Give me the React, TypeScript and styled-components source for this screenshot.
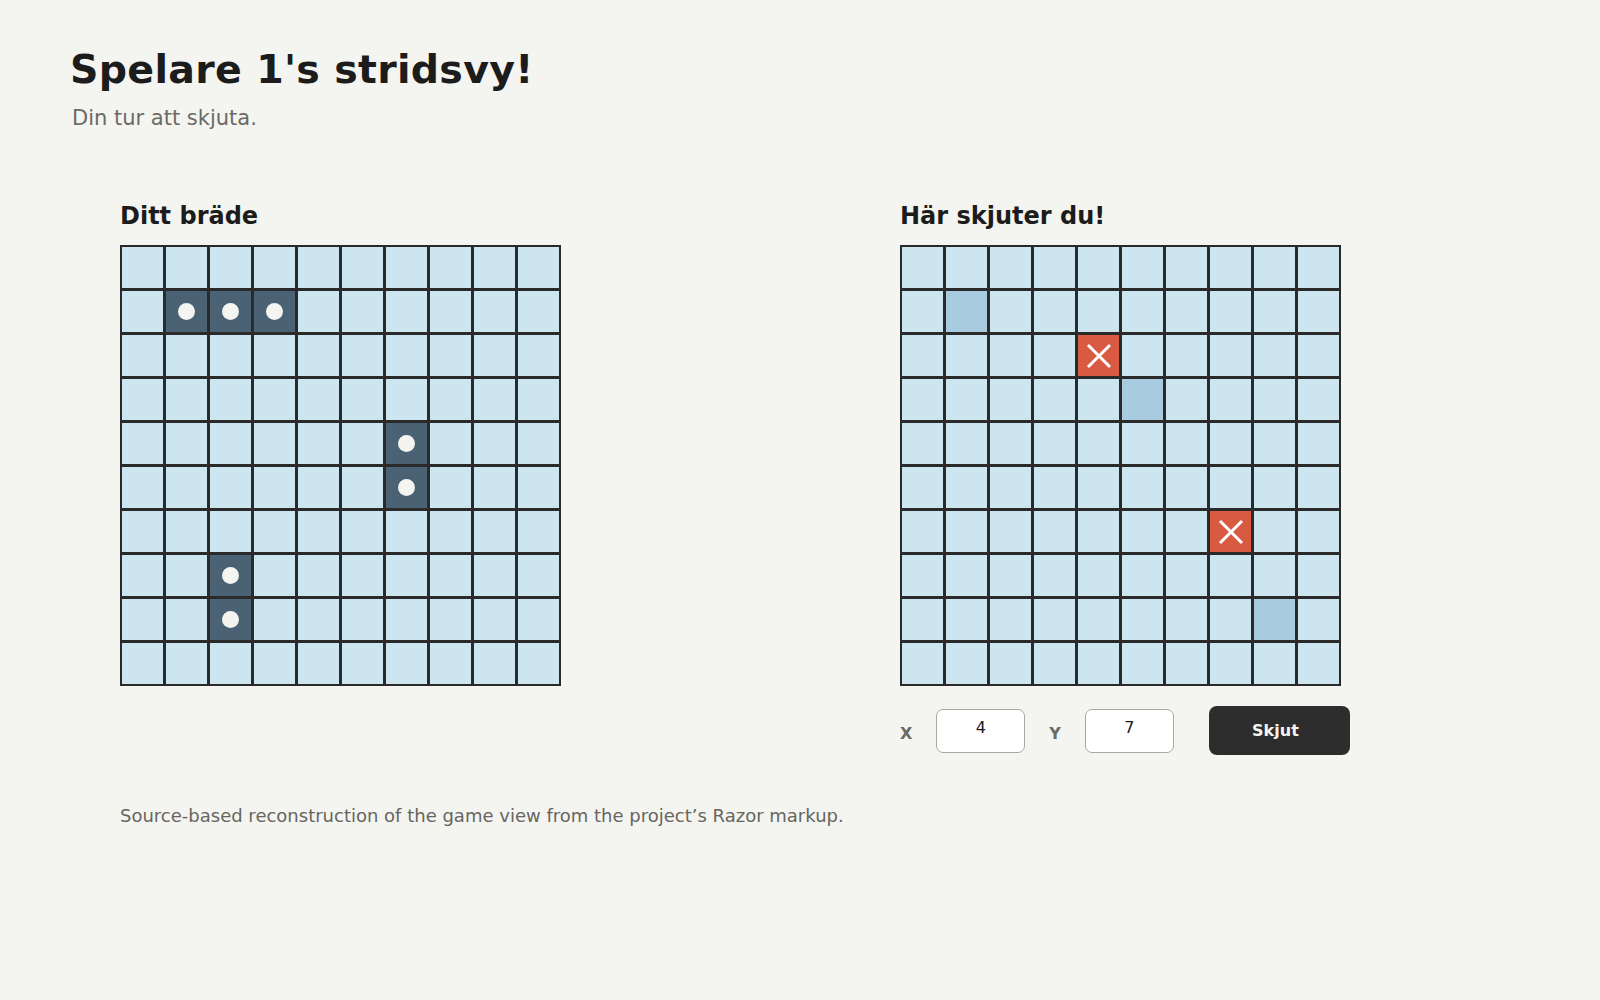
import React from 'react';
import styled, {createGlobalStyle} from 'styled-components';

type CellKind = 'water' | 'ship' | 'miss' | 'hit';

const SIZE = 10;

const Global_Style = createGlobalStyle`
  html, body {
    margin: 0;
    padding: 0;
    background: #f4f4f0;
  }
  body {
    font-family: 'DejaVu Sans', 'Liberation Sans', sans-serif;
    color: #1c1c1c;
  }
`;

const Page = styled.main`
  min-height: 1000px;
  padding: 43px 70px 0;
  box-sizing: border-box;
`;

const Title = styled.h1`
  margin: 0;
  font-size: 39.5px;
  font-weight: 700;
  letter-spacing: 0.3px;
  line-height: 52px;
`;

const Subtitle = styled.p`
  margin: 11px 0 0 2px;
  font-size: 21px;
  color: #6a6a66;
`;

const Boards = styled.section`
  display: grid;
  grid-template-columns: 441px auto;
  column-gap: 339px;
  margin: 72px 0 0 50px;
`;

const Board_Column = styled.div`
  display: flex;
  flex-direction: column;
`;

const Board_Title = styled.h2`
  margin: 0 0 15px;
  font-size: 24px;
  font-weight: 700;
  line-height: 28px;
`;

const Grid = styled.div`
  display: grid;
  grid-template-columns: repeat(${SIZE}, 41px);
  grid-auto-rows: 41px;
  gap: 3px;
  width: max-content;
  border: 2px solid #2a2a2a;
  background: #2a2a2a;
`;

const cellColors: Record<CellKind, string> = {
  water: '#cce5ef',
  ship: '#4b6275',
  miss: '#a8cbe0',
  hit: '#d95a42',
};

const Cell = styled.div<{$kind: CellKind}>`
  display: flex;
  align-items: center;
  justify-content: center;
  background: ${(p) => cellColors[p.$kind]};
`;

const Peg = styled.span`
  width: 17px;
  height: 17px;
  border-radius: 50%;
  background: #f4f4f1;
`;

const Controls = styled.div`
  display: flex;
  align-items: center;
  margin-top: 20px;
`;

const Axis_Label = styled.label`
  font-size: 16px;
  font-weight: 700;
  color: #6a6a66;
  margin: 5px 24px 0 0;
`;

const Coord_Input = styled.input`
  width: 89px;
  height: 44px;
  box-sizing: border-box;
  border: 1.5px solid #a8a8a8;
  border-radius: 7px;
  background: #fff;
  padding: 0 0 6px;
  text-align: center;
  font-family: 'DejaVu Sans', sans-serif;
  font-size: 16px;
  color: #1c1c1c;
  margin-right: 24px;
  outline: none;
`;

const Fire_Button = styled.button`
  width: 141px;
  height: 49px;
  margin-left: 11px;
  padding: 0 8px 0 0;
  border: none;
  border-radius: 8px;
  background: #2d2d2d;
  color: #f4f4f0;
  font-family: 'DejaVu Sans', sans-serif;
  font-size: 16px;
  font-weight: 700;
  cursor: pointer;
`;

const Footnote = styled.p`
  margin: 50px 0 0 50px;
  font-size: 18px;
  color: #66665f;
`;

function HitMark() {
  return (
    <svg width='26' height='26' viewBox='0 0 26 26'>
      <path d='M2 2 L24 24 M24 2 L2 24' stroke='#fff' strokeWidth='3' />
    </svg>
  );
}

function buildBoard(marks: Array<[number, number, CellKind]>): CellKind[][] {
  const rows: CellKind[][] = Array.from({length: SIZE}, () =>
    Array.from({length: SIZE}, () => 'water' as CellKind)
  );
  marks.forEach(([r, c, k]) => {
    rows[r][c] = k;
  });
  return rows;
}

const ownBoard = buildBoard([
  [1, 1, 'ship'],
  [1, 2, 'ship'],
  [1, 3, 'ship'],
  [4, 6, 'ship'],
  [5, 6, 'ship'],
  [7, 2, 'ship'],
  [8, 2, 'ship'],
]);

const targetBoard = buildBoard([
  [1, 1, 'miss'],
  [2, 4, 'hit'],
  [3, 5, 'miss'],
  [6, 7, 'hit'],
  [8, 8, 'miss'],
]);

function Board({cells}: {cells: CellKind[][]}) {
  return (
    <Grid>
      {cells.map((row, r) =>
        row.map((kind, c) => (
          <Cell key={`${r}-${c}`} $kind={kind}>
            {kind === 'ship' && <Peg />}
            {kind === 'hit' && <HitMark />}
          </Cell>
        ))
      )}
    </Grid>
  );
}

export default function App() {
  return (
    <>
      <Global_Style />
      <Page>
        <Title>Spelare 1's stridsvy!</Title>
        <Subtitle>Din tur att skjuta.</Subtitle>
        <Boards>
          <Board_Column>
            <Board_Title>Ditt bräde</Board_Title>
            <Board cells={ownBoard} />
          </Board_Column>
          <Board_Column>
            <Board_Title>Här skjuter du!</Board_Title>
            <Board cells={targetBoard} />
            <Controls>
              <Axis_Label htmlFor='x'>X</Axis_Label>
              <Coord_Input id='x' type='text' defaultValue='4' />
              <Axis_Label htmlFor='y'>Y</Axis_Label>
              <Coord_Input id='y' type='text' defaultValue='7' />
              <Fire_Button>Skjut</Fire_Button>
            </Controls>
          </Board_Column>
        </Boards>
        <Footnote>
          Source-based reconstruction of the game view from the project’s Razor
          markup.
        </Footnote>
      </Page>
    </>
  );
}
